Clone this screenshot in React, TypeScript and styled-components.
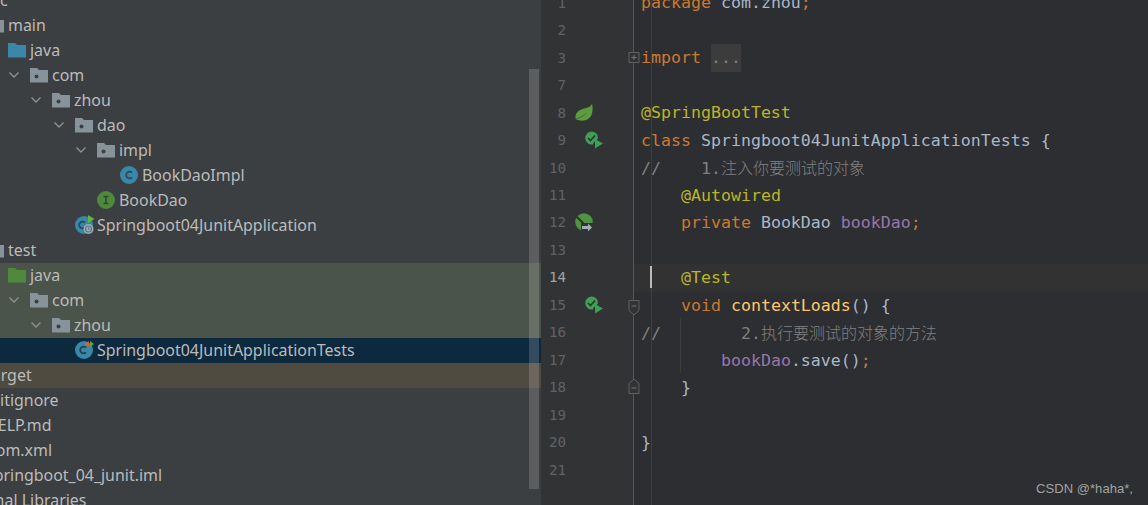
import React from 'react';
import styled, { createGlobalStyle } from 'styled-components';

const GlobalStyle = createGlobalStyle`
  html, body {
    margin: 0;
    padding: 0;
    background: #2d2e31;
    overflow: hidden;
  }
`;

const Page = styled.div`
  position: relative;
  display: flex;
  width: 1148px;
  height: 505px;
  overflow: hidden;
`;

/* project tree */
const Sidebar = styled.div`
  position: relative;
  width: 541px;
  flex: none;
  height: 505px;
  overflow: hidden;
  background: #3c3f41;
`;

const TreeList = styled.div`
  display: flex;
  flex-direction: column;
  margin-top: -12px;
`;

const TreeRow = styled.div<{ $tone?: string }>`
  display: flex;
  height: 25px;
  flex: none;
  background: ${({ $tone }) =>
    $tone === 'test' ? '#4b544a' : $tone === 'selected' ? '#0d293e' : $tone === 'excluded' ? '#4f4b41' : 'transparent'};
`;

const RowContent = styled.div<{ $indent: number }>`
  display: flex;
  align-items: center;
  height: 23px;
  margin-left: ${({ $indent }) => $indent}px;
`;

const ChevronSlot = styled.span`
  display: flex;
  width: 22px;
  flex: none;
  align-items: center;
`;

const IconSlot = styled.span`
  display: flex;
  width: 22px;
  height: 20px;
  flex: none;
  align-items: center;
`;

const TreeLabel = styled.span`
  font-family: "Noto Sans", "Open Sans", sans-serif;
  font-size: 15.95px;
  color: #bbbbbb;
  white-space: nowrap;
`;

const Scrollbar = styled.div`
  position: absolute;
  left: 529px;
  top: 69px;
  width: 10px;
  height: 420px;
  background: rgba(255, 255, 255, 0.16);
`;

/* editor */
const Gutter = styled.div`
  width: 92px;
  flex: none;
  height: 505px;
  overflow: hidden;
  background: #313335;
  border-right: 1px solid #55585a;
`;

const LineColumn = styled.div`
  display: flex;
  flex-direction: column;
  margin-top: -11px;
`;

const CodeColumn = styled(LineColumn)`
  margin-top: -10.6px;
`;

const GutterRow = styled.div`
  display: flex;
  height: 27.47px;
  flex: none;
  align-items: center;
`;

const LineNumber = styled.span<{ $current?: boolean }>`
  width: 25px;
  flex: none;
  text-align: right;
  font-family: "DejaVu Sans Mono", monospace;
  font-size: 14.2px;
  color: ${({ $current }) => ($current ? '#a4a3a3' : '#606366')};
`;

const MarkSlot = styled.span<{ $offset: number }>`
  display: flex;
  align-items: center;
  margin-left: ${({ $offset }) => $offset}px;
`;

const CodeArea = styled.div`
  position: relative;
  flex: 1;
  height: 505px;
  overflow: hidden;
  background: #2d2e31;
`;

const CodeRow = styled.div<{ $current?: boolean }>`
  height: 27.47px;
  line-height: 27.47px;
  flex: none;
  padding-left: 7px;
  white-space: pre;
  font-family: "DejaVu Sans Mono", "Noto Sans CJK SC", monospace;
  font-size: 16.6px;
  color: #a9b7c6;
  background: ${({ $current }) => ($current ? '#323232' : 'transparent')};
`;

const Keyword = styled.span`
  color: #cc7832;
`;
const Annotation = styled.span`
  color: #bbb529;
`;
const Comment = styled.span`
  color: #808080;
`;
const CjkComment = styled.span`
  color: #808080;
  font-family: "Noto Sans CJK SC", sans-serif;
  font-size: 16px;
  font-weight: 300;
`;
const Field = styled.span`
  color: #9876aa;
`;
const Method = styled.span`
  color: #ffc66d;
`;
const Folded = styled.span`
  display: inline-block;
  height: 28px;
  color: #808080;
  background: #3c3c3c;
`;

const MarginLine = styled.div`
  position: absolute;
  left: 17px;
  top: 0;
  bottom: 0;
  width: 1px;
  background: #3d3e40;
`;

const IndentGuide = styled.div`
  position: absolute;
  left: 46px;
  top: 318px;
  width: 1px;
  height: 55px;
  background: #3d3e40;
`;

const Caret = styled.div`
  position: absolute;
  left: 16px;
  top: 266px;
  width: 2px;
  height: 22px;
  background: #bbbbbb;
`;

const FoldMark = styled.svg<{ $top: number }>`
  position: absolute;
  left: 628px;
  top: ${({ $top }) => $top}px;
`;

const Watermark = styled.div`
  position: absolute;
  right: 15px;
  bottom: 9px;
  font-family: "Liberation Sans", Arial, sans-serif;
  font-size: 13px;
  letter-spacing: 0.05px;
  color: #a2a2a2;
`;

const Chevron = () => (
  <svg width="12" height="8" viewBox="0 0 12 8">
    <polyline points="1.5,1.5 6,6 10.5,1.5" fill="none" stroke="#8d9193" strokeWidth="1.4" />
  </svg>
);

const Folder = ({ color }: { color: string }) => (
  <svg width="18" height="16" viewBox="0 0 18 16">
    <path d="M0 1h7l2 2h9v12.5H0z" fill={color} />
  </svg>
);

const PackageFolder = () => (
  <svg width="18" height="16" viewBox="0 0 18 16">
    <path d="M0 1h7l2 2h9v12.5H0z" fill="#87939a" />
    <circle cx="6.5" cy="9.5" r="2" fill="#3c3f41" />
  </svg>
);

const ClassIcon = () => (
  <svg width="18" height="18" viewBox="0 0 18 18">
    <circle cx="9" cy="9" r="9" fill="#3a87a9" />
    <path d="M12 6.6A3.4 3.4 0 1 0 12 11.4" fill="none" stroke="#2b4a57" strokeWidth="1.7" />
  </svg>
);

const InterfaceIcon = () => (
  <svg width="18" height="18" viewBox="0 0 18 18">
    <circle cx="9" cy="9" r="9" fill="#4f8a3c" />
    <path d="M6.5 5.5h5M6.5 12.5h5M9 5.5v7" fill="none" stroke="#2e4a26" strokeWidth="1.6" />
  </svg>
);

const AppIcon = () => (
  <svg width="20" height="20" viewBox="0 0 20 20" style={{ overflow: 'visible' }}>
    <circle cx="9" cy="10" r="9" fill="#3a87a9" />
    <path d="M10 7.6A3.4 3.4 0 1 0 10 12.4" fill="none" stroke="#2b4a57" strokeWidth="1.7" />
    <polygon points="13,0 19.5,4 13,8" fill="#5fb83a" />
    <circle cx="13.5" cy="14" r="5" fill="#a4acb1" />
    <circle cx="13.5" cy="14" r="3" fill="none" stroke="#4e7c93" strokeWidth="1.2" />
    <path d="M13.5 12.4v1.8h1.4" fill="none" stroke="#4e7c93" strokeWidth="0.9" />
  </svg>
);

const TestClassIcon = () => (
  <svg width="20" height="20" viewBox="0 0 20 20" style={{ overflow: 'visible' }}>
    <circle cx="9" cy="10" r="9" fill="#3a87a9" />
    <path d="M11 7.6A3.4 3.4 0 1 0 11 12.4" fill="none" stroke="#23404c" strokeWidth="1.7" />
    <polygon points="10,4 14,1 14,7" fill="#d9622b" />
    <polygon points="15,1 19,4 15,7" fill="#5fa83a" />
  </svg>
);

const LeafIcon = () => (
  <svg width="18" height="19" viewBox="0 0 18 19">
    <path d="M17 0.5C16 4 13 4.5 9 5.5C3.5 7 0 10 0.5 15.5C1 16 1.5 16.5 3 17C8 18.5 14 17.5 16.5 12C18 8 17.8 4 17 0.5Z" fill="#5c9c3e" />
    <path d="M1 16C5 14.5 9 13 11.5 10" fill="none" stroke="#3f6f2c" strokeWidth="1" />
  </svg>
);

const RunIcon = () => (
  <svg width="18" height="18" viewBox="0 0 18 18">
    <path d="M12.5 4A6.5 6.5 0 1 0 8 13.5L9 11L11.5 9.5L13 7Z" fill="#3f9f55" />
    <polyline points="3,7 5.5,9.5 10,4.5" fill="none" stroke="#2f3234" strokeWidth="1.6" />
    <polygon points="10,8 18,12.5 10,17.5" fill="#3f9f55" />
  </svg>
);

const AutowiredIcon = () => (
  <svg width="18" height="19" viewBox="0 0 18 19">
    <circle cx="9" cy="9" r="8.8" fill="#4f9440" />
    <path d="M1 3L11 13" stroke="#2f3234" strokeWidth="2" />
    <rect x="6" y="10" width="12" height="9" fill="#313335" />
    <path d="M7 13h6v-2.5l4 4-4 4V16H7z" fill="#a3adb3" />
  </svg>
);

const FoldPlus = () => (
  <FoldMark $top={52} width="12" height="12" viewBox="0 0 12 12">
    <rect x="1" y="0.5" width="10" height="10" fill="#313335" stroke="#5e6163" />
    <path d="M3.5 5.5h5M6 3v5" stroke="#75787a" />
  </FoldMark>
);

const FoldStart = () => (
  <FoldMark $top={300} width="12" height="16" viewBox="0 0 12 16">
    <path d="M1 0.5h10v10l-5 4.5l-5-4.5z" fill="#313335" stroke="#5e6163" />
    <path d="M3.5 6h5" stroke="#75787a" />
  </FoldMark>
);

const FoldEnd = () => (
  <FoldMark $top={378} width="12" height="16" viewBox="0 0 12 16">
    <path d="M1 15.5v-10l5-4.5l5 4.5v10z" fill="#313335" stroke="#5e6163" />
    <path d="M3.5 10h5" stroke="#75787a" />
  </FoldMark>
);

type TreeItem = {
  label: string;
  indent: number;
  open?: boolean;
  icon?: React.ReactNode;
  tone?: string;
};

const treeItems: TreeItem[] = [
  { label: 'src', indent: -58 },
  { label: 'main', indent: -36, open: true, icon: <Folder color="#87939a" /> },
  { label: 'java', indent: -14, open: true, icon: <Folder color="#3a87a9" /> },
  { label: 'com', indent: 8, open: true, icon: <PackageFolder /> },
  { label: 'zhou', indent: 30, open: true, icon: <PackageFolder /> },
  { label: 'dao', indent: 53, open: true, icon: <PackageFolder /> },
  { label: 'impl', indent: 75, open: true, icon: <PackageFolder /> },
  { label: 'BookDaoImpl', indent: 98, icon: <ClassIcon /> },
  { label: 'BookDao', indent: 75, icon: <InterfaceIcon /> },
  { label: 'Springboot04JunitApplication', indent: 53, icon: <AppIcon /> },
  { label: 'test', indent: -36, open: true, icon: <Folder color="#87939a" /> },
  { label: 'java', indent: -14, open: true, icon: <Folder color="#4f8a3c" />, tone: 'test' },
  { label: 'com', indent: 8, open: true, icon: <PackageFolder />, tone: 'test' },
  { label: 'zhou', indent: 30, open: true, icon: <PackageFolder />, tone: 'test' },
  { label: 'Springboot04JunitApplicationTests', indent: 53, icon: <TestClassIcon />, tone: 'selected' },
  { label: 'target', indent: -58, tone: 'excluded' },
  { label: '.gitignore', indent: -58 },
  { label: 'HELP.md', indent: -58 },
  { label: 'pom.xml', indent: -58 },
  { label: 'springboot_04_junit.iml', indent: -58 },
  { label: 'External Libraries', indent: -88 },
];

type GutterItem = {
  line: number;
  mark?: React.ReactNode;
  offset?: number;
};

const gutterItems: GutterItem[] = [
  { line: 1 },
  { line: 2 },
  { line: 3 },
  { line: 7 },
  { line: 8, mark: <LeafIcon />, offset: 9 },
  { line: 9, mark: <RunIcon />, offset: 19 },
  { line: 10 },
  { line: 11 },
  { line: 12, mark: <AutowiredIcon />, offset: 9 },
  { line: 13 },
  { line: 14 },
  { line: 15, mark: <RunIcon />, offset: 19 },
  { line: 16 },
  { line: 17 },
  { line: 18 },
  { line: 19 },
  { line: 20 },
  { line: 21 },
];

export default function App() {
  return (
    <Page>
      <GlobalStyle />
      <Sidebar>
        <TreeList>
          {treeItems.map((item, index) => (
            <TreeRow key={index} $tone={item.tone}>
              <RowContent $indent={item.indent}>
                <ChevronSlot>{item.open && <Chevron />}</ChevronSlot>
                <IconSlot>{item.icon}</IconSlot>
                <TreeLabel>{item.label}</TreeLabel>
              </RowContent>
            </TreeRow>
          ))}
        </TreeList>
        <Scrollbar />
      </Sidebar>

      <Gutter>
        <LineColumn>
          {gutterItems.map((item) => (
            <GutterRow key={item.line}>
              <LineNumber $current={item.line === 14}>{item.line}</LineNumber>
              {item.mark && <MarkSlot $offset={item.offset ?? 0}>{item.mark}</MarkSlot>}
            </GutterRow>
          ))}
        </LineColumn>
      </Gutter>

      <CodeArea>
        <MarginLine />
        <IndentGuide />
        <CodeColumn>
          <CodeRow>
            <Keyword>package</Keyword> com.zhou<Keyword>;</Keyword>
          </CodeRow>
          <CodeRow />
          <CodeRow>
            <Keyword>import</Keyword> <Folded>...</Folded>
          </CodeRow>
          <CodeRow />
          <CodeRow>
            <Annotation>@SpringBootTest</Annotation>
          </CodeRow>
          <CodeRow>
            <Keyword>class</Keyword> Springboot04JunitApplicationTests {'{'}
          </CodeRow>
          <CodeRow>
            <Comment>{'//    1.'}</Comment>
            <CjkComment>注入你要测试的对象</CjkComment>
          </CodeRow>
          <CodeRow>
            {'    '}
            <Annotation>@Autowired</Annotation>
          </CodeRow>
          <CodeRow>
            {'    '}
            <Keyword>private</Keyword> BookDao <Field>bookDao</Field>
            <Keyword>;</Keyword>
          </CodeRow>
          <CodeRow />
          <CodeRow $current>
            {'    '}
            <Annotation>@Test</Annotation>
          </CodeRow>
          <CodeRow>
            {'    '}
            <Keyword>void</Keyword> <Method>contextLoads</Method>() {'{'}
          </CodeRow>
          <CodeRow>
            <Comment>{'//        2.'}</Comment>
            <CjkComment>执行要测试的对象的方法</CjkComment>
          </CodeRow>
          <CodeRow>
            {'        '}
            <Field>bookDao</Field>.save()<Keyword>;</Keyword>
          </CodeRow>
          <CodeRow>{'    }'}</CodeRow>
          <CodeRow />
          <CodeRow>{'}'}</CodeRow>
          <CodeRow />
        </CodeColumn>
        <Caret />
      </CodeArea>
      <FoldPlus />
      <FoldStart />
      <FoldEnd />
      <Watermark>CSDN @*haha*,</Watermark>
    </Page>
  );
}
